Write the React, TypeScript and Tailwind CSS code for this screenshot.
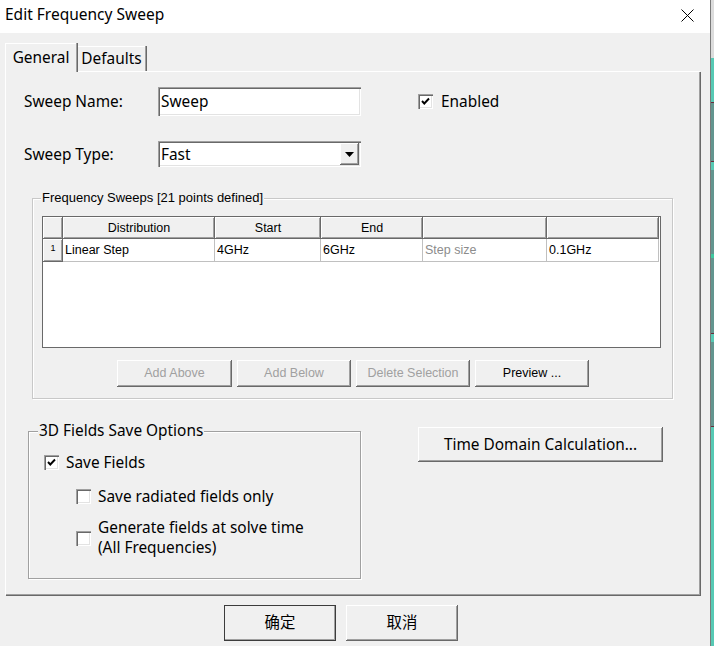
import type { ReactNode } from "react";

const UI_FONT = "font-['Noto_Sans','Noto_Sans_CJK_SC',sans-serif]";
const SMALL_FONT = "font-['Liberation_Sans','Noto_Sans_CJK_SC',sans-serif]";

// classic win32 bevels
const RAISED =
  "shadow-[inset_-1px_-1px_0_#696969,inset_1px_1px_0_#ffffff,inset_-2px_-2px_0_#a0a0a0,inset_2px_2px_0_#f0f0f0]";
const SUNKEN =
  "shadow-[inset_1px_1px_0_#a0a0a0,inset_2px_2px_0_#696969,inset_-1px_-1px_0_#ffffff,inset_-2px_-2px_0_#e3e3e3]";
const CELL_HEAD =
  "shadow-[inset_-1px_-1px_0_#696969,inset_1px_1px_0_#ffffff,inset_-2px_-2px_0_#a0a0a0]";

function CheckBox({ checked }: { checked?: boolean }) {
  return (
    <span className={`flex h-[15px] w-[15px] shrink-0 items-center justify-center bg-white ${SUNKEN}`}>
      {checked && (
        <svg width="9" height="9" viewBox="0 0 9 9">
          <path d="M1 4 L3.3 6.5 L8 1.5" fill="none" stroke="#000" strokeWidth="1.9" />
        </svg>
      )}
    </span>
  );
}

function Button({
  children,
  w,
  h,
  disabled,
  className = "",
}: {
  children: ReactNode;
  w: string;
  h: string;
  disabled?: boolean;
  className?: string;
}) {
  return (
    <div
      className={`flex items-center justify-center bg-[#f0f0f0] ${RAISED} ${w} ${h} ${
        disabled ? "text-[#a0a0a0]" : "text-black"
      } ${className}`}
    >
      {children}
    </div>
  );
}

const COLS = [
  { w: "w-[20px]", head: "", cell: "1" },
  { w: "w-[152px]", head: "Distribution", cell: "Linear Step" },
  { w: "w-[106px]", head: "Start", cell: "4GHz" },
  { w: "w-[102px]", head: "End", cell: "6GHz" },
  { w: "w-[124px]", head: "", cell: "Step size" },
  { w: "w-[112px]", head: "", cell: "0.1GHz" },
];

function SweepTable() {
  return (
    <div className={`ml-[9px] mt-[17px] h-[132px] w-[619px] border border-[#696969] bg-white ${SMALL_FONT} text-[12.5px]`}>
      {/* header */}
      <div className="flex h-[22px]">
        {COLS.map((c, i) => (
          <div key={i} className={`flex items-center justify-center bg-[#f0f0f0] ${CELL_HEAD} ${c.w}`}>
            {c.head}
          </div>
        ))}
      </div>
      {/* row 1 */}
      <div className="flex h-[23px]">
        {COLS.map((c, i) =>
          i === 0 ? (
            <div
              key={i}
              className={`flex items-start justify-center pt-[3px] bg-[#f0f0f0] text-[9px] ${CELL_HEAD} ${c.w}`}
            >
              {c.cell}
            </div>
          ) : (
            <div
              key={i}
              className={`flex items-center border-b border-r border-[#c0c0c0] pl-[2px] ${c.w} ${
                i === 4 ? "text-[#8c8c8c]" : "text-black"
              }`}
            >
              {c.cell}
            </div>
          )
        )}
      </div>
    </div>
  );
}

export default function App() {
  return (
    <div className={`flex h-[646px] w-[714px] overflow-hidden ${UI_FONT} text-[15.4px] text-black`}>
      <div className="flex w-[710px] flex-col bg-[#f0f0f0]">
        {/* title bar */}
        <div className="flex h-[33px] shrink-0 items-center justify-between bg-white pb-[3px] pl-[5px] pr-[16px]">
          <span className="text-[15.5px] leading-none">Edit Frequency Sweep</span>
          <svg width="13" height="13" viewBox="0 0 13 13">
            <path d="M0.5 0.5 L12.5 12.5 M12.5 0.5 L0.5 12.5" stroke="#000" strokeWidth="1" />
          </svg>
        </div>

        {/* tabs */}
        <div className="mt-[10px] flex items-end pl-[5px]">
          <div className="relative z-10 -mb-px flex h-[29px] w-[71px] items-center justify-center border-l border-t border-white bg-[#f0f0f0] shadow-[1px_0_0_#a0a0a0,2px_0_0_#696969]">
            General
          </div>
          <div className="ml-px flex h-[25px] w-[68px] items-center justify-center border-l border-t border-white bg-[#f0f0f0] shadow-[1px_0_0_#a0a0a0,2px_0_0_#696969]">
            Defaults
          </div>
        </div>

        {/* tab panel */}
        <div className="ml-[5px] flex h-[524px] w-[695px] flex-col border-l border-t border-white shadow-[inset_-1px_-1px_0_#a0a0a0,1px_1px_0_#696969]">
          {/* sweep name */}
          <div className="mt-[15px] flex h-[29px] items-center">
            <span className="w-[152px] pl-[18px]">Sweep Name:</span>
            <div className={`flex h-[29px] w-[203px] items-center bg-white pl-[3px] ${SUNKEN}`}>Sweep</div>
            <div className="ml-[57px] flex items-center gap-[8px]">
              <CheckBox checked />
              <span>Enabled</span>
            </div>
          </div>

          {/* sweep type */}
          <div className="mt-[25px] flex h-[26px] items-center">
            <span className="w-[152px] pl-[18px] pt-[2px]">Sweep Type:</span>
            <div className={`flex h-[26px] w-[203px] items-center justify-between bg-white pl-[3px] pr-[2px] ${SUNKEN}`}>
              <span className="pt-[2px]">Fast</span>
              <div className={`flex h-[22px] w-[19px] items-center justify-center bg-[#f0f0f0] ${RAISED}`}>
                <svg width="9" height="5" viewBox="0 0 9 5">
                  <path d="M0 0 H9 L4.5 5 Z" fill="#000" />
                </svg>
              </div>
            </div>
          </div>

          {/* frequency sweeps group */}
          <div className="relative ml-[26px] mt-[31px] h-[201px] w-[641px] border border-[#c8c8c8] shadow-[inset_1px_1px_0_#ffffff,1px_1px_0_#ffffff]">
            <span className={`absolute -top-[9px] left-[8px] bg-[#f0f0f0] px-[1px] leading-[16px] ${SMALL_FONT} text-[13px]`}>
              Frequency Sweeps [21 points defined]
            </span>
            <SweepTable />
            <div className={`ml-[84px] mt-[12px] flex gap-[5px] ${SMALL_FONT} text-[12.5px]`}>
              <Button w="w-[115px]" h="h-[27px]" disabled>Add Above</Button>
              <Button w="w-[114px]" h="h-[27px]" disabled>Add Below</Button>
              <Button w="w-[114px]" h="h-[27px]" disabled>Delete Selection</Button>
              <Button w="w-[114px]" h="h-[27px]">Preview ...</Button>
            </div>
          </div>

          {/* 3d fields + time domain */}
          <div className="mt-[28px] flex items-start">
            <div className="relative ml-[22px] mt-[4px] h-[148px] w-[333px] border border-[#a0a0a0] shadow-[inset_1px_1px_0_#ffffff,1px_1px_0_#ffffff]">
              <span className="absolute -top-[12px] left-[9px] bg-[#f0f0f0] px-[1px] leading-[22px]">
                3D Fields Save Options
              </span>
              <div className="ml-[15px] mt-[23px] flex h-[15px] items-center gap-[7px]">
                <CheckBox checked />
                <span>Save Fields</span>
              </div>
              <div className="ml-[47px] mt-[19px] flex h-[15px] items-center gap-[7px]">
                <CheckBox />
                <span>Save radiated fields only</span>
              </div>
              <div className="ml-[47px] mt-[14px] flex items-center gap-[7px]">
                <CheckBox />
                <span className="leading-[20px]">
                  Generate fields at solve time
                  <br />
                  (All Frequencies)
                </span>
              </div>
            </div>
            <Button w="w-[245px]" h="h-[35px]" className="ml-[57px]">
              Time Domain Calculation...
            </Button>
          </div>
        </div>

        {/* dialog buttons */}
        <div className="mt-[10px] flex gap-[10px] pl-[224px]">
          <Button w="w-[112px]" h="h-[36px]" className="outline outline-1 -outline-offset-1 outline-[#3c3c3c]">
            确定
          </Button>
          <Button w="w-[112px]" h="h-[36px]">取消</Button>
        </div>
      </div>

      {/* desktop behind the dialog */}
      <div className="flex flex-1 flex-col border-l border-[#7a7a7a]">
        <div className="h-[58px] bg-[#dcdcdc]" />
        <div className="h-[44px] bg-[#57c9b4]" />
        <div className="h-px bg-[#6b2b3a]" />
        <div className="h-[58px] bg-[#63958f]" />
        <div className="h-px bg-[#6b2b3a]" />
        <div className="h-[8px] bg-[#57c9b4]" />
        <div className="h-[84px] bg-[#63958f]" />
        <div className="h-[4px] bg-[#3ec99f]" />
        <div className="h-[75px] bg-[#63958f]" />
        <div className="h-px bg-[#6b2b3a]" />
        <div className="h-[8px] bg-[#57c9b4]" />
        <div className="h-[84px] bg-[#63958f]" />
        <div className="h-px bg-[#6b2b3a]" />
        <div className="flex-1 bg-[#57c9b4]" />
      </div>
    </div>
  );
}
